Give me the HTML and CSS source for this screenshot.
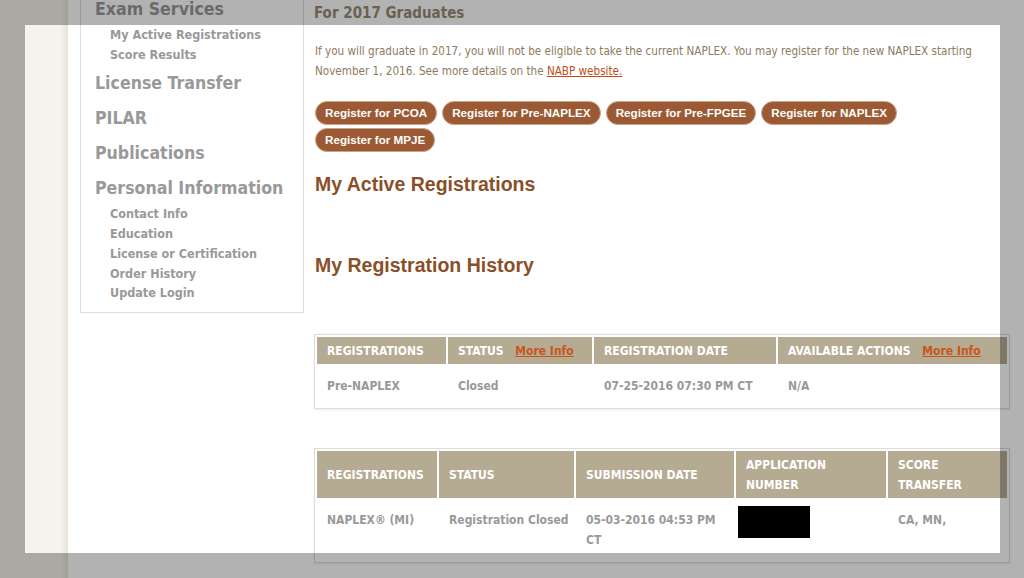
FILE: index.html
```html
<!DOCTYPE html>
<html>
<head>
    <title>My Registrations</title>
    <link rel="stylesheet" href="styles.css">
</head>
<body>
    <div class="page">
        <div class="gutter"></div>
        <div class="main">
            <!-- Menu lateral -->
            <div class="sidebar">
                <h3>Exam Services</h3>
                <ul class="side-links">
                    <li><a href="#">My Active Registrations</a></li>
                    <li><a href="#">Score Results</a></li>
                </ul>
                <h3>License Transfer</h3>
                <h3>PILAR</h3>
                <h3>Publications</h3>
                <h3>Personal Information</h3>
                <ul class="side-links">
                    <li><a href="#">Contact Info</a></li>
                    <li><a href="#">Education</a></li>
                    <li><a href="#">License or Certification</a></li>
                    <li><a href="#">Order History</a></li>
                    <li><a href="#">Update Login</a></li>
                </ul>
            </div>

            <div class="content">
                <h2 class="notice-title">For 2017 Graduates</h2>
                <p class="notice">If you will graduate in 2017, you will not be eligible to take the current NAPLEX. You may register for the new NAPLEX starting November 1, 2016. See more details on the <a href="#">NABP website.</a></p>

                <div class="buttons">
                    <a class="reg-button" href="#">Register for PCOA</a>
                    <a class="reg-button" href="#">Register for Pre-NAPLEX</a>
                    <a class="reg-button" href="#">Register for Pre-FPGEE</a>
                    <a class="reg-button" href="#">Register for NAPLEX</a>
                    <a class="reg-button" href="#">Register for MPJE</a>
                </div>

                <h1 class="section-title">My Active Registrations</h1>
                <h1 class="section-title history">My Registration History</h1>

                <table class="reg-table">
                    <thead>
                        <tr>
                            <th class="w-129">Registrations</th>
                            <th class="w-144">Status <a href="#" class="more-info">More Info</a></th>
                            <th class="w-182">Registration Date</th>
                            <th class="w-229">Available Actions <a href="#" class="more-info">More Info</a></th>
                        </tr>
                    </thead>
                    <tbody>
                        <tr>
                            <td>Pre-NAPLEX</td>
                            <td>Closed</td>
                            <td>07-25-2016 07:30 PM CT</td>
                            <td>N/A</td>
                        </tr>
                    </tbody>
                </table>

                <table class="reg-table second">
                    <thead>
                        <tr>
                            <th class="w-120">Registrations</th>
                            <th class="w-135">Status</th>
                            <th class="w-158">Submission Date</th>
                            <th class="w-150">Application<br>Number</th>
                            <th class="w-119">Score<br>Transfer</th>
                        </tr>
                    </thead>
                    <tbody>
                        <tr>
                            <td>NAPLEX&reg; (MI)</td>
                            <td class="nowrap">Registration Closed</td>
                            <td>05-03-2016 04:53 PM<br>CT</td>
                            <td class="app-number"><span class="redacted"></span></td>
                            <td>CA, MN,</td>
                        </tr>
                    </tbody>
                </table>
            </div>
        </div>
    </div>

    <div class="spotlight"></div>
</body>
</html>
```

FILE: styles.css
```css
body {
    margin: 0;
    padding: 0;
    background-color: #f6f3ed;
    font-family: "DejaVu Sans Condensed", "DejaVu Sans", sans-serif;
    font-stretch: condensed;
    overflow: hidden;
}

.page {
    display: flex;
    height: 600px;
}

.gutter {
    width: 68px;
    flex-shrink: 0;
}

.main {
    flex: 1;
    display: flex;
    align-items: flex-start;
    gap: 10px;
    padding-left: 12px;
    margin-top: -19px;
    background-color: #fff;
    box-shadow: -5px 0 7px -3px rgba(120, 100, 60, 0.15);
}

/* Menu lateral */
.sidebar {
    width: 208px;
    flex-shrink: 0;
    border: 1px solid #ddd;
    padding: 10px 0 7px 14px;
}

.sidebar h3 {
    margin: 0;
    font-size: 17.6px;
    line-height: 35px;
    color: #999;
}

.side-links {
    list-style-type: none;
    margin: -2px 0 2px;
    padding: 0 0 0 15px;
}

.side-links li {
    font-size: 12.5px;
    line-height: 19.7px;
    font-weight: bold;
}

.side-links a {
    color: #999;
    text-decoration: none;
}

/* Contenido */
.content {
    width: 695px;
    flex-shrink: 0;
    padding-top: 20px;
}

.notice-title {
    margin: 0;
    font-size: 15px;
    line-height: 24px;
    color: #988b72;
}

.notice {
    margin: 16px 0 0 1px;
    font-size: 11.6px;
    line-height: 20px;
    color: #8c7b5c;
}

.notice a {
    color: #c24d14;
}

.buttons {
    display: flex;
    flex-wrap: wrap;
    gap: 3px 5px;
    margin-top: 20px;
    padding-left: 1px;
    width: 600px;
}

.reg-button {
    display: inline-block;
    height: 22px;
    line-height: 22px;
    padding: 0 9px;
    border: 1px solid #caa58d;
    border-radius: 12px;
    background-color: #9b5a33;
    color: #fff;
    font-family: "Liberation Sans", Arial, sans-serif;
    font-size: 11.65px;
    font-weight: bold;
    text-decoration: none;
}

.section-title {
    margin: 20px 0 0 1px;
    font-family: "Liberation Sans", Arial, sans-serif;
    font-size: 19.5px;
    line-height: 24px;
    color: #8a4f28;
}

.section-title.history {
    margin-top: 57px;
}

/* Tablas */
.reg-table {
    width: 696px;
    margin-top: 57px;
    border: 1px solid #ddd;
    border-spacing: 2px;
    box-shadow: 0 1px 2px rgba(0, 0, 0, 0.08);
    table-layout: fixed;
    font-size: 12px;
    font-weight: bold;
}

.reg-table.second {
    margin-top: 39px;
}

.reg-table th {
    padding: 4px 10px 3px;
    line-height: 20px;
    text-align: left;
    text-transform: uppercase;
    background-color: #b5aa92;
    color: #fff;
}

.reg-table td {
    padding: 10px;
    line-height: 20px;
    vertical-align: top;
    color: #999;
}

.reg-table td.nowrap {
    white-space: nowrap;
}

.more-info {
    margin-left: 8px;
    text-transform: none;
    color: #c9561c;
}

.reg-table td.app-number {
    padding: 6px 2px;
}

.redacted {
    display: block;
    width: 72px;
    height: 32px;
    background-color: #000;
}

.w-129 { width: 109px; }
.w-144 { width: 124px; }
.w-182 { width: 162px; }
.w-229 { width: 209px; }
.w-120 { width: 100px; }
.w-135 { width: 115px; }
.w-158 { width: 138px; }
.w-150 { width: 130px; }
.w-119 { width: 99px; }

/* Zona resaltada */
.spotlight {
    position: fixed;
    left: 25px;
    top: 25px;
    width: 975px;
    height: 528px;
    box-shadow: 0 0 0 2000px rgba(0, 0, 0, 0.3);
    pointer-events: none;
}
```
